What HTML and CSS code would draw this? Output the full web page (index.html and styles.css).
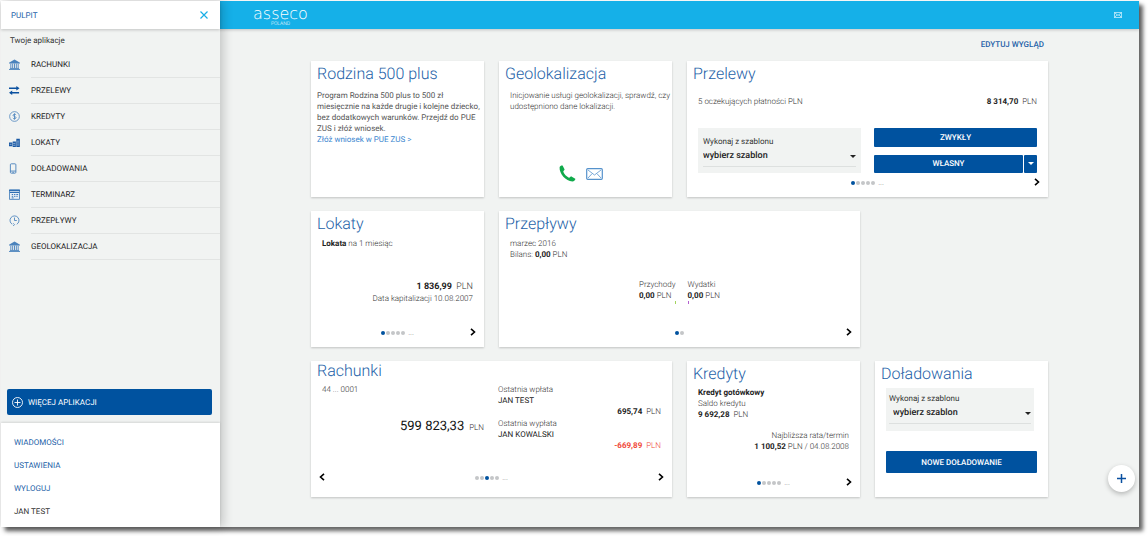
FILE: index.html
```html
<!DOCTYPE html>
<html lang="pl">
<head>
<meta charset="utf-8">
<title>Pulpit</title>
<meta name="viewport" content="width=device-width, initial-scale=1">
<link rel="stylesheet" href="styles.css">
</head>
<body>
<svg class="sprite" aria-hidden="true">
  <symbol id="bank" viewBox="0 0 12 12"><path d="M0 4 6 .5 12 4v1H0z" fill="#4a82bc"/><path d="M2 5v5M4 5v5M6 5v5M8 5v5M10 5v5M1 10.300h10M0 11.500h12" stroke="#4a82bc" fill="none"/></symbol>
  <symbol id="next" viewBox="0 0 6 8"><path d="M1 .8 4.500 4 1 7.200" fill="none" stroke="#000" stroke-width="1.600"/></symbol>
  <symbol id="caret" viewBox="0 0 6 3"><path d="M0 0h6L3 3z" fill="currentColor"/></symbol>
</svg>
<div class="app">
  <aside class="sidebar">
    <div class="sidebar-head">
      <span>PULPIT</span>
      <button class="icon-button" aria-label="Zamknij"><svg width="8" height="8" viewBox="0 0 8 8"><path d="M.5.5l7 7M7.500.5l-7 7" stroke="#18aee6" stroke-width="1.200"/></svg></button>
    </div>
    <p class="sidebar-caption">Twoje aplikacje</p>
    <nav>
      <ul class="apps">
        <li><svg class="app-icon"><use href="#bank"/></svg><a href="#">RACHUNKI</a></li>
        <li><svg class="app-icon" viewBox="0 0 12 12"><path d="M0 3.500h9M3 8.500h8" stroke="#0a50a0" stroke-width="1.500"/><path d="M8 1l3.500 2.500L8 6zM3.500 6 0 8.500 3.500 11z" fill="#0a50a0"/></svg><a href="#">PRZELEWY</a></li>
        <li><svg class="app-icon" viewBox="0 0 12 12" fill="none" stroke="#5288c0"><circle cx="6" cy="6" r="5.300" stroke-width=".9"/><path d="M7.800 4.300C7.300 3.300 4.400 3.200 4.400 4.700 4.400 6.200 7.700 5.700 7.700 7.300 7.700 8.800 4.700 8.800 4.200 7.600M6 2.600v6.800"/></svg><a href="#">KREDYTY</a></li>
        <li><svg class="app-icon" viewBox="0 0 12 12"><path d="M0 6h3.500v4H0zM4 5h3.500v6H4zM8 2h3.800v9H8z" fill="#1858a4"/><path d="M.8 8h2M4.500 7h2.300M4.500 9h2.300M8.700 4.500h2.300M8.700 6.500h2.300M8.700 8.700h2.300" stroke="#c5d7ea" stroke-width=".7"/></svg><a href="#">LOKATY</a></li>
        <li><svg class="app-icon" viewBox="0 0 12 12"><rect x="1.500" y=".9" width="6" height="10.200" rx="1" fill="#f1f3f2" stroke="#4a82bc"/><path d="M1.500 8.800h6M3.700 10.200h1.600" stroke="#4a82bc"/></svg><a href="#">DOŁADOWANIA</a></li>
        <li><svg class="app-icon" viewBox="0 0 12 12"><path d="M.5 1h11v10.300H.5z" fill="#e7eff6" stroke="#4a82bc"/><path d="M0 1.500h12M1 3.700h10" stroke="#3070b4" stroke-width="1.200"/><path d="M3 6h1.500M5.500 6H7M8 6h2M3 8h1.500M5.500 8H7M8 8h1.500M3 9.700h2" stroke="#3070b4"/></svg><a href="#">TERMINARZ</a></li>
        <li><svg class="app-icon" viewBox="0 0 12 12" fill="none" stroke="#5288c0"><path d="M3.500 10.100A4.900 4.900 0 1 1 8.500 10.100"/><path d="M6 2.800V6h2.500M4.500 9l1.500 1.500L4.500 12"/></svg><a href="#">PRZEPŁYWY</a></li>
        <li><svg class="app-icon"><use href="#bank"/></svg><a href="#">GEOLOKALIZACJA</a></li>
      </ul>
    </nav>
    <button class="button more"><svg width="11" height="11" viewBox="0 0 11 11" fill="none" stroke="#fff" stroke-width=".9"><circle cx="5.500" cy="5.500" r="5"/><path d="M5.500 2.500v6M2.500 5.500h6"/></svg>WIĘCEJ APLIKACJI</button>
    <ul class="account">
      <li><a href="#">WIADOMOŚCI</a></li>
      <li><a href="#">USTAWIENIA</a></li>
      <li><a href="#">WYLOGUJ</a></li>
      <li>JAN TEST</li>
    </ul>
  </aside>
  <div class="page">
    <header class="topbar">
      <div class="logo"><span class="logo-name">asseco</span><span class="logo-sub">POLAND</span></div>
      <button class="icon-button" aria-label="Wiadomości"><svg width="8" height="6" viewBox="0 0 8 6" fill="none" stroke="#d8f2fc" stroke-width=".8"><path d="M.4.4h7.200v5.200H.4zL4 3.500 7.600.4M.4 5.600 3 2.800M7.600 5.600 5 2.800"/></svg></button>
    </header>
    <main class="main">
      <button class="edit">EDYTUJ WYGLĄD</button>
      <div class="cards">
        <section class="card card--text">
          <h2>Rodzina 500 plus</h2>
          <p class="promo">Program Rodzina 500 plus to 500 zł miesięcznie na każde drugie i kolejne dziecko, bez dodatkowych warunków. Przejdź do PUE ZUS i złóż wniosek.<br><a href="#">Złóż wniosek w PUE ZUS &gt;</a></p>
        </section>

        <section class="card card--text">
          <h2>Geolokalizacja</h2>
          <div class="body body--geo">
            <p>Inicjowanie usługi geolokalizacji, sprawdź, czy udostępniono dane lokalizacji.</p>
            <div class="contact">
              <button class="icon-button" aria-label="Zadzwoń"><svg width="17" height="17" viewBox="0 0 17 17"><path d="M.6 2.300C1 .9 2.700.2 3.600.6L5.600 4.500C5.700 5.100 4.100 6 4.300 6.800 5.200 9.300 7.400 11.600 9.900 12.700 10.800 12.900 11.700 11.100 12.400 11.400L16.300 13.700C16.600 15 15 16.300 13.400 16.500 6.800 16.300.1 8.600.6 2.300z" fill="#10aa4b"/></svg></button>
              <button class="icon-button" aria-label="Napisz"><svg width="17" height="12" viewBox="0 0 17 12" fill="none" stroke="#5592cc"><rect x=".7" y=".7" width="15.600" height="10.600" rx="1" stroke-width="1.200"/><path d="M2 2l6.500 5L15 2M2 10l4-4.300M15 10l-4-4.300" stroke-width=".8"/></svg></button>
            </div>
          </div>
        </section>

        <section class="card card--wide">
          <h2>Przelewy</h2>
          <div class="body body--transfers">
            <div class="split"><span>5 oczekujących płatności PLN</span><span><b>8 314,70</b>&nbsp; PLN</span></div>
            <div class="transfer-form">
              <div class="field">
                <label for="tpl1">Wykonaj z szablonu</label>
                <div class="select"><select id="tpl1"><option>wybierz szablon</option></select><svg width="6" height="3"><use href="#caret"/></svg></div>
              </div>
              <div class="transfer-buttons">
                <button class="button">ZWYKŁY</button>
                <div class="button-group"><button class="button">WŁASNY</button><button class="button" aria-label="Więcej"><svg width="6" height="3"><use href="#caret"/></svg></button></div>
              </div>
            </div>
          </div>
          <div class="pager"><span></span><span class="dots"><i class="on"></i><i></i><i></i><i></i><i></i><em>...</em></span><button class="icon-button" aria-label="Następny"><svg width="6" height="8"><use href="#next"/></svg></button></div>
        </section>

        <section class="card">
          <h2>Lokaty</h2>
          <div class="body">
            <p><b>Lokata</b> na 1 miesiąc</p>
            <p class="right push"><span class="amount"><b>1 836,99</b>&nbsp; PLN</span><br>Data kapitalizacji 10.08.2007</p>
          </div>
          <div class="pager"><span></span><span class="dots"><i class="on"></i><i></i><i></i><i></i><i></i><em>...</em></span><button class="icon-button" aria-label="Następny"><svg width="6" height="8"><use href="#next"/></svg></button></div>
        </section>

        <section class="card card--wide">
          <h2>Przepływy</h2>
          <div class="body">
            <p>marzec 2016<br>Bilans: <b>0,00</b> PLN</p>
            <div class="flows">
              <p class="flow-in">Przychody<br><b>0,00</b> PLN</p>
              <p class="flow-out">Wydatki<br><b>0,00</b> PLN</p>
            </div>
          </div>
          <div class="pager"><span></span><span class="dots"><i class="on"></i><i></i></span><button class="icon-button" aria-label="Następny"><svg width="6" height="8"><use href="#next"/></svg></button></div>
        </section>

        <section class="card card--wide card--raised">
          <h2>Rachunki</h2>
          <div class="body accounts">
            <div class="balance"><p>44 ... 0001</p><p class="right total"><strong>599 823,33</strong> PLN</p></div>
            <div>
              <p>Ostatnia wpłata<br><span class="name">JAN TEST</span></p>
              <p class="right"><b>695,74</b>&nbsp; PLN</p>
              <p class="last">Ostatnia wypłata<br><span class="name">JAN KOWALSKI</span></p>
              <p class="right negative"><b>-669,89</b>&nbsp; PLN</p>
            </div>
          </div>
          <div class="pager"><button class="icon-button prev" aria-label="Poprzedni"><svg width="6" height="8"><use href="#next"/></svg></button><span class="dots"><i></i><i></i><i class="on"></i><i></i><i></i><em>...</em></span><button class="icon-button" aria-label="Następny"><svg width="6" height="8"><use href="#next"/></svg></button></div>
        </section>

        <section class="card">
          <h2>Kredyty</h2>
          <div class="body body--loan">
            <p><b>Kredyt gotówkowy</b><br>Saldo kredytu<br><b>9 692,28</b>&nbsp; PLN</p>
            <p class="right rate">Najbliższa rata/termin<br><b>1 100,52</b> PLN / 04.08.2008</p>
          </div>
          <div class="pager"><span></span><span class="dots"><i class="on"></i><i></i><i></i><i></i><i></i><em>...</em></span><button class="icon-button" aria-label="Następny"><svg width="6" height="8"><use href="#next"/></svg></button></div>
        </section>

        <section class="card">
          <h2>Doładowania</h2>
          <div class="topup">
            <div class="field field--indent">
              <label for="tpl2">Wykonaj z szablonu</label>
              <div class="select"><select id="tpl2"><option>wybierz szablon</option></select><svg width="6" height="3"><use href="#caret"/></svg></div>
            </div>
            <button class="button">NOWE DOŁADOWANIE</button>
          </div>
        </section>
      </div>
    </main>
  </div>
  <button class="fab" aria-label="Dodaj"><svg width="9" height="9" viewBox="0 0 9 9"><path d="M4.500 0v9M0 4.500h9" stroke="#0a50a0" stroke-width="1.500"/></svg></button>
</div>
</body>
</html>
```
FILE: styles.css
```css
* { box-sizing: border-box; }

body {
  margin: 0;
  padding: 1px 9px 9px 1px;
  background: #fff;
  color: #333;
  font: 300 8px/11px Roboto, "Liberation Sans", sans-serif;
  text-rendering: geometricPrecision;
}

h2, p, ul { margin: 0; padding: 0; }
ul { list-style: none; }
a { color: inherit; text-decoration: none; }
b { font-weight: 700; color: #222; }
button, select { font: inherit; color: inherit; text-rendering: inherit; }
svg { display: block; flex: none; }
.sprite { position: absolute; width: 0; height: 0; }

.app {
  position: relative;
  display: flex;
  min-height: calc(100vh - 10px);
  background: #f1f3f2;
  box-shadow: 4px 4px 4px #666;
}

/* Sidebar */
.sidebar {
  position: relative;
  display: flex;
  flex-direction: column;
  flex: none;
  width: 219px;
  background: #f1f3f2;
  box-shadow: 3px 0 10px rgba(0, 0, 0, 0.2);
}

.sidebar-head {
  display: flex;
  align-items: center;
  justify-content: space-between;
  height: 28px;
  padding: 0 12px 0 10px;
  background: #fff;
  box-shadow: 0 1px 3px rgba(0, 0, 0, 0.2);
  color: #1d5fa8;
  font-weight: 400;
}

.sidebar-caption { padding: 6px 9px; font-weight: 400; }

.apps li {
  display: flex;
  align-items: center;
  gap: 11px;
  height: 26px;
  padding-left: 8px;
}

.apps a {
  flex: 1;
  border-bottom: 1px solid #e2e4e3;
  color: #222;
  font-weight: 400;
  line-height: 25px;
}

.app-icon { width: 11px; height: 11px; margin-bottom: 1px; }

.button {
  display: flex;
  align-items: center;
  justify-content: center;
  flex: 1;
  padding: 0;
  border: 0;
  border-radius: 1px;
  background: #00529f;
  color: #fff;
  font-weight: 500;
}

.more {
  flex: none;
  justify-content: flex-start;
  gap: 5px;
  height: 26px;
  margin: auto 8px 8px 6px;
  padding-left: 5px;
  border-radius: 2px;
  font-weight: 400;
}

.account {
  padding: 8px 13px 4px;
  background: #fff;
  box-shadow: 0 -1px 2px rgba(0, 0, 0, 0.12);
  font-weight: 400;
  line-height: 23px;
}

.account a { color: #1d5fa8; }

/* Page */
.page { flex: 1; min-width: 0; }

.topbar {
  display: flex;
  align-items: center;
  justify-content: space-between;
  height: 28px;
  padding: 0 17px 0 33px;
  background: #15b0e8;
  box-shadow: 0 1px 3px rgba(0, 0, 0, 0.2);
}

.icon-button { padding: 0; border: 0; background: none; }

.logo {
  display: flex;
  flex-direction: column;
  align-items: center;
  padding-top: 3px;
  color: #fff;
}

.logo-name { font: 200 16px/14px "DejaVu Sans", sans-serif; }
.logo-sub { font-size: 5px; line-height: 6px; }

.main { max-width: 737px; margin: 0 auto; padding: 9px 0 30px; }

.edit {
  display: block;
  margin: 0 4px 10px auto;
  padding: 0;
  border: 0;
  background: none;
  color: #1d5fa8;
  font-weight: 500;
  line-height: 13px;
}

.cards {
  display: grid;
  grid-template-columns: repeat(4, minmax(0, 1fr));
  grid-auto-rows: minmax(136px, auto);
  gap: 14px 15px;
}

.card {
  display: flex;
  flex-direction: column;
  padding: 3px 11px 8px 6px;
  background: #fff;
  box-shadow: 0 1px 2px rgba(0, 0, 0, 0.2);
}

.card--wide { grid-column: span 2; }
.card--raised { padding-top: 0; padding-bottom: 13px; }
.card--text { padding-right: 1px; }

.card h2 {
  color: #1d5fa8;
  font-size: 16px;
  font-weight: 300;
  line-height: 20px;
}

.promo { padding: 6px 0; color: #555; font-weight: 400; }
.promo a { color: #3a86cf; }

.body {
  display: flex;
  flex-direction: column;
  flex: 1;
  padding: 4px 0 0 5px;
}

.body--geo { padding-top: 6px; }
.body--loan { padding-top: 3px; }

.contact {
  display: flex;
  align-items: center;
  justify-content: center;
  gap: 10px;
  margin: auto 20px 7px 0;
}

.body--transfers { padding-top: 12px; }
.split { display: flex; justify-content: space-between; }

.transfer-form {
  display: grid;
  grid-template-columns: 1fr 1fr;
  gap: 13px;
  margin-top: 21px;
}

.field { padding: 8px 5px 6px; background: #f1f3f2; }
.field label { display: block; font-weight: 400; }

.select {
  display: flex;
  align-items: center;
  border-bottom: 1px solid #dde0df;
  color: #222;
}

.select select {
  flex: 1;
  min-width: 0;
  height: 19px;
  padding: 0;
  border: 0;
  background: none;
  appearance: none;
  font-size: 9px;
  font-weight: 500;
}

.field--indent { margin-right: 3px; padding: 5px 3px 7px; }
.field--indent select { padding-left: 4px; }

.transfer-buttons { display: flex; flex-direction: column; gap: 8px; }
.button-group { display: flex; flex: 1; gap: 1px; }
.button-group .button:last-child { flex: none; width: 13px; }

.right { text-align: right; }
.push { margin-top: 32px; }
.amount { font-size: 9px; }
.card .rate { margin-top: 10px; }

.flows { display: flex; justify-content: center; gap: 12px; margin-top: 19px; }
.flows p::after { content: ""; display: block; width: 1px; height: 3px; }
.flows .flow-in::after { margin-left: auto; background: #a3d55d; }
.flows .flow-out::after { background: #b45fd0; }

.accounts { display: grid; grid-template-columns: 162px 1fr; gap: 14px; padding-top: 3px; }
.name { color: #222; font-weight: 400; }
.last { padding-top: 1px; }
.negative, .negative b { color: #f04a3a; }
.total { padding-top: 24px; line-height: 15px; }
.total strong { margin-right: 3px; color: #111; font-size: 13px; font-weight: 400; }

.pager {
  display: grid;
  grid-template-columns: 1fr auto 1fr;
  align-items: center;
  height: 14px;
  margin: 0 -3px 0 2px;
}

.pager > :last-child { justify-self: end; }
.pager .prev { justify-self: start; transform: scaleX(-1); }

.dots { display: flex; align-items: center; gap: 1px; padding-top: 2px; }
.dots i { width: 4px; height: 4px; border-radius: 50%; background: #c4c6c8; }
.dots .on { background: #00529f; }
.dots em { margin-left: 2px; font-style: normal; line-height: 4px; }

.topup { display: flex; flex-direction: column; gap: 20px; padding: 4px 0 0 5px; }
.topup .button { flex: none; height: 22px; }

.fab {
  position: absolute;
  right: 4px;
  bottom: 35px;
  display: flex;
  align-items: center;
  justify-content: center;
  width: 27px;
  height: 27px;
  padding: 0;
  border: 0;
  border-radius: 50%;
  background: #fff;
  box-shadow: 0 2px 5px rgba(0, 0, 0, 0.25);
}
```
